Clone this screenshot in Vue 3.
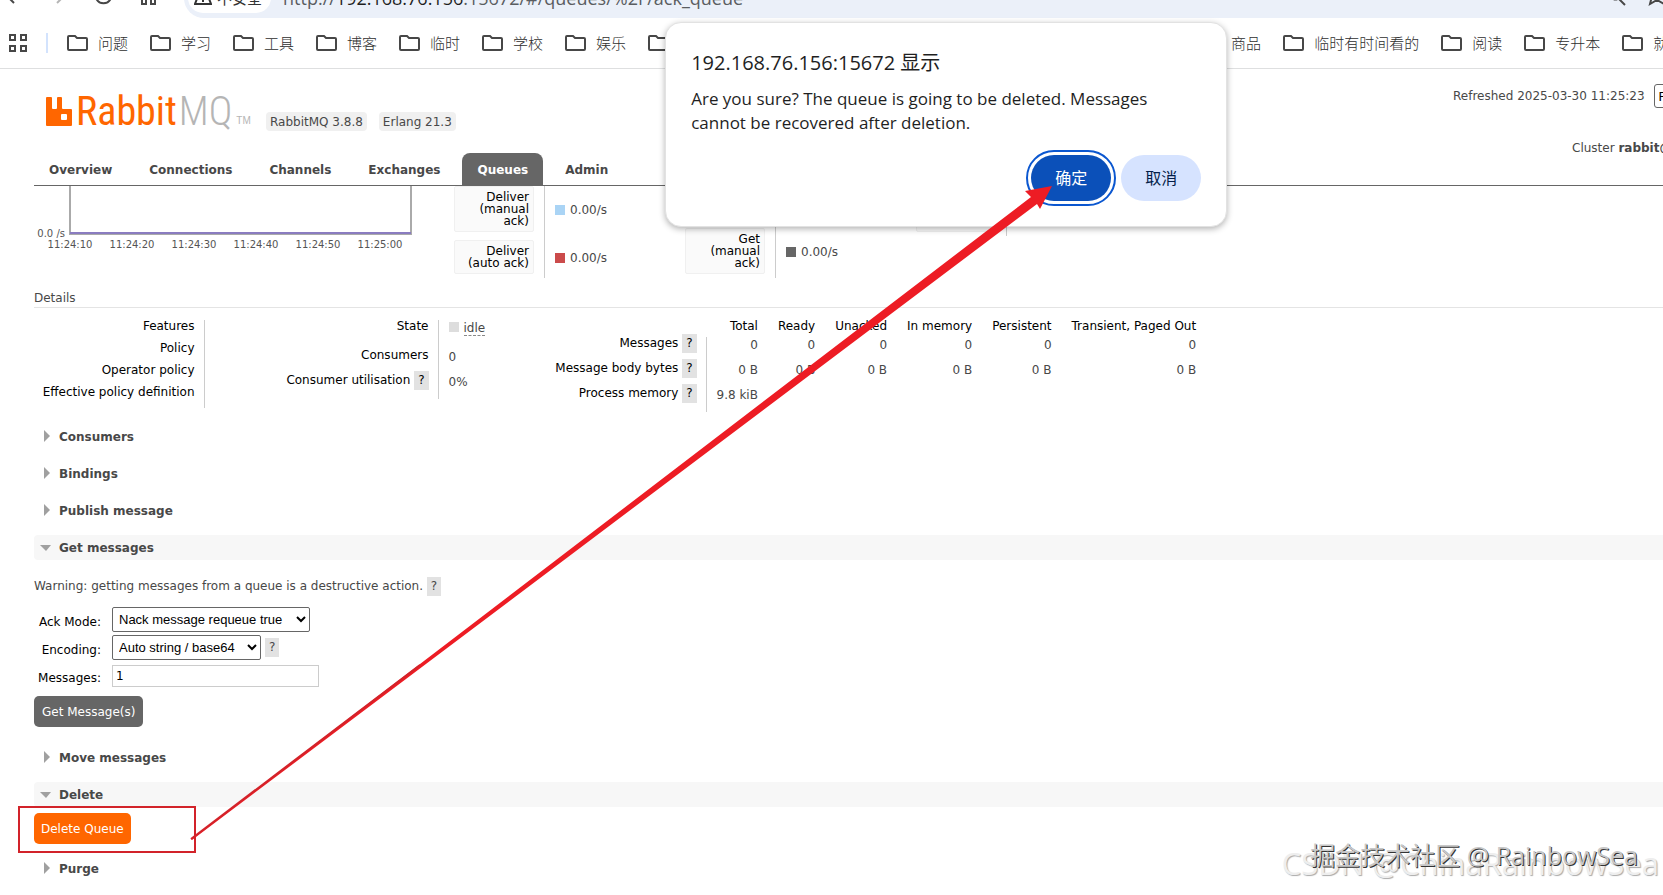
<script setup>
import { ref } from 'vue'

const bookmarks = ['问题', '学习', '工具', '博客', '临时', '学校', '娱乐', '']
const moreBookmarks = ['商品', '临时有时间看的', '阅读', '专升本', '就业']
const tabs = ['Overview', 'Connections', 'Channels', 'Exchanges', 'Queues', 'Admin']
const ticks = ['11:24:10', '11:24:20', '11:24:30', '11:24:40', '11:24:50', '11:25:00']
const columns = ['Total', 'Ready', 'Unacked', 'In memory', 'Persistent', 'Transient, Paged Out']
const usage = [
  { name: 'Messages', values: ['0', '0', '0', '0', '0', '0'] },
  { name: 'Message body bytes', values: ['0 B', '0 B', '0 B', '0 B', '0 B', '0 B'] },
  { name: 'Process memory', values: ['9.8 kiB', '', '', '', '', ''] },
]
const ackMode = ref('Nack message requeue true')
const encoding = ref('Auto string / base64')
const count = ref('1')
</script>

<template>
  <div class="window">
    <header class="toolbar">
      <svg class="nav-icons" width="184" height="19" viewBox="0 0 184 19" fill="none" stroke="#474747" stroke-width="2">
        <path d="M8 -3l6 6" />
        <path d="M63 -3l-6 6" stroke="#b5b5b5" />
        <path d="M96 -2a8 8 0 0 0 15 0" />
        <path d="M142 -4v8h4v-6h5v6h4v-8" />
      </svg>
      <div class="omnibox">
        <div class="chip">
          <svg width="18" height="10" viewBox="0 0 18 10" fill="none" stroke="#333" stroke-width="2"><path d="M4 -3L1 5h16L14 -3M9 -2v5" /></svg>
          <span>不安全</span>
        </div>
        <span class="url">http://<b>192.168.76.156</b>:15672/#/queues/%2F/ack_queue</span>
        <svg class="end-icons" width="56" height="12" viewBox="0 0 56 12" fill="none" stroke="#474747" stroke-width="2"><path d="M5 -1c2 2 5 2 7 0M11 -1l7 7M45 -3l-2 8l7-4l7 4" /></svg>
      </div>
    </header>

    <nav class="bookmarks">
      <svg class="apps" width="18" height="18" viewBox="0 0 18 18" fill="none" stroke="#474747" stroke-width="2"><path d="M1 1h5v5H1zM12 1h5v5h-5zM1 12h5v5H1zM12 12h5v5h-5z" /></svg>
      <span class="divider"></span>
      <a v-for="b in bookmarks" :key="b" href="#" class="bookmark">
        <svg width="21" height="16" viewBox="0 0 21 16"><path d="M1 14V2q0-1 1-1h6l2 2h9q1 0 1 1v10q0 1-1 1H2q-1 0-1-1z" fill="none" stroke="#474747" stroke-width="2" /></svg>
        <span>{{ b }}</span>
      </a>
      <div class="bookmarks-more">
        <a v-for="b in moreBookmarks" :key="b" href="#" class="bookmark">
          <svg width="21" height="16" viewBox="0 0 21 16"><path d="M1 14V2q0-1 1-1h6l2 2h9q1 0 1 1v10q0 1-1 1H2q-1 0-1-1z" fill="none" stroke="#474747" stroke-width="2" /></svg>
          <span>{{ b }}</span>
        </a>
      </div>
    </nav>

    <div class="masthead">
      <a class="logo" href="#">
        <svg width="26" height="29" viewBox="0 0 26 29"><path fill="#f60" fill-rule="evenodd" d="M1 0h4q1 0 1 1v10q0 1 1 1h3q1 0 1-1V1q0-1 1-1h3q1 0 1 1v10q0 1 1 1h8q1 0 1 1v15q0 1-1 1H1q-1 0-1-1V1q0-1 1-1zM16 17q-1 0-1 1v4q0 1 1 1h4q1 0 1-1v-4q0-1-1-1z" /></svg>
        <span class="brand">Rabbit<span class="mq">MQ</span></span><span class="tm">TM</span>
      </a>
      <span class="badge">RabbitMQ 3.8.8</span>
      <span class="badge">Erlang 21.3</span>
      <div class="status">
        <div class="refreshed">
          <label for="interval">Refreshed 2025-03-30 11:25:23</label>
          <select id="interval"><option>Refresh every 5 seconds</option></select>
        </div>
        <div class="cluster">Cluster <b>rabbit@</b></div>
      </div>
    </div>

    <nav class="tabs">
      <a v-for="t in tabs" :key="t" href="#" :class="{ active: t === 'Queues' }">{{ t }}</a>
    </nav>

    <main>
      <div class="rates">
        <svg class="chart" width="420" height="70" viewBox="0 0 420 70">
          <path d="M36 0V48H377V0" fill="none" stroke="#aaa" stroke-width="2" />
          <path d="M36 47H377" stroke="#8a7cc0" stroke-width="2" />
          <text x="31" y="51" text-anchor="end">0.0 /s</text>
          <text v-for="(t, i) in ticks" :key="t" :x="36 + i * 62" y="62" text-anchor="middle">{{ t }}</text>
        </svg>
        <div class="group">
          <div class="rate"><span class="card">Deliver<br>(manual<br>ack)</span><span class="value"><i class="blue"></i>0.00/s</span></div>
          <div class="rate"><span class="card">Deliver<br>(auto ack)</span><span class="value"><i class="red"></i>0.00/s</span></div>
        </div>
        <div class="group below">
          <div class="rate"><span class="card">Get<br>(manual<br>ack)</span><span class="value"><i class="grey"></i>0.00/s</span></div>
        </div>
        <div class="group">
          <div class="rate"><span class="card tall"></span><span class="value"></span></div>
        </div>
      </div>

      <h3>Details</h3>
      <div class="facts">
        <table class="policy">
          <tbody>
            <tr><th>Features</th><td></td></tr>
            <tr><th>Policy</th><td></td></tr>
            <tr><th>Operator policy</th><td></td></tr>
            <tr><th>Effective policy definition</th><td></td></tr>
          </tbody>
        </table>
        <table class="state">
          <tbody>
            <tr class="first"><th>State</th><td><i class="light"></i><abbr>idle</abbr></td></tr>
            <tr><th>Consumers</th><td>0</td></tr>
            <tr><th>Consumer utilisation <a class="help" href="#">?</a></th><td>0%</td></tr>
          </tbody>
        </table>
        <table class="usage">
          <thead>
            <tr><td></td><th v-for="c in columns" :key="c">{{ c }}</th></tr>
          </thead>
          <tbody>
            <tr v-for="u in usage" :key="u.name">
              <th>{{ u.name }} <a class="help" href="#">?</a></th>
              <td v-for="(v, i) in u.values" :key="i">{{ v }}</td>
            </tr>
          </tbody>
        </table>
      </div>

      <h2><button>Consumers</button></h2>
      <h2><button>Bindings</button></h2>
      <h2><button>Publish message</button></h2>
      <h2 class="open"><button>Get messages</button></h2>
      <p class="warning">Warning: getting messages from a queue is a destructive action. <a class="help" href="#">?</a></p>
      <form @submit.prevent>
        <div class="field">
          <label for="ack">Ack Mode:</label>
          <select id="ack" v-model="ackMode" class="wide"><option>Nack message requeue true</option></select>
        </div>
        <div class="field">
          <label for="enc">Encoding:</label>
          <select id="enc" v-model="encoding"><option>Auto string / base64</option></select>
          <a class="help" href="#">?</a>
        </div>
        <div class="field">
          <label for="count">Messages:</label>
          <input id="count" v-model="count" type="text">
        </div>
        <button class="action">Get Message(s)</button>
      </form>
      <h2><button>Move messages</button></h2>
      <h2 class="open"><button>Delete</button></h2>
      <div class="delete"><button class="action danger">Delete Queue</button></div>
      <h2><button>Purge</button></h2>
    </main>

    <div class="dialog" role="dialog" aria-labelledby="dialog-title">
      <h1 id="dialog-title">192.168.76.156:15672 显示</h1>
      <p>Are you sure? The queue is going to be deleted. Messages cannot be recovered after deletion.</p>
      <div class="buttons">
        <button class="ok">确定</button>
        <button class="cancel">取消</button>
      </div>
    </div>

    <svg class="annotation" width="1100" height="895" viewBox="0 0 1100 895">
      <rect x="19" y="807" width="176" height="45" fill="none" stroke="#d2232a" stroke-width="2" />
      <path d="M191 839L1031 197L1025 191L1052 186L1040 209L1037 204L192 840z" fill="#ed1c24" />
      <path d="M191 839L420 665" stroke="#d2232a" stroke-width="2" />
    </svg>
    <div class="mark back">CSDN @ChinaRainbowSea</div>
    <div class="mark front">掘金技术社区 @ RainbowSea</div>
  </div>
</template>

<style>
body { margin: 0; background: #fff; }
</style>

<style scoped>
* { box-sizing: border-box; }
.window {
  position: relative;
  min-height: 100vh;
  overflow: hidden;
  background: #fff;
  color: #484848;
  font: 12px/16px "DejaVu Sans", Verdana, sans-serif;
}
a { color: inherit; text-decoration: none; }
button { font: inherit; border: 0; cursor: pointer; }

.toolbar { display: flex; height: 18px; overflow: hidden; }
.nav-icons { flex: none; }
.omnibox {
  flex: 1;
  display: flex;
  align-items: center;
  height: 40px;
  margin-top: -22px;
  padding-left: 4px;
  border-radius: 20px 0 0 20px;
  background: #ebf0f9;
  font: 18px/24px "Open Sans", "Noto Sans CJK SC", sans-serif;
  white-space: nowrap;
}
.chip {
  display: flex;
  align-items: center;
  gap: 5px;
  height: 30px;
  padding: 0 9px 0 6px;
  border-radius: 15px;
  background: #fff;
  color: #333;
  font-size: 15px;
}
.chip svg { margin-top: 12px; }
.url { margin-left: 12px; color: #5a5d61; }
.url b { font-weight: 400; color: #1f1f1f; }
.end-icons { margin: 14px 0 0 auto; }

.bookmarks {
  display: flex;
  align-items: center;
  height: 51px;
  padding-left: 9px;
  border-bottom: 1px solid #dedfe0;
  color: #2e2e2e;
  font: 15px/20px "Noto Sans CJK SC", sans-serif;
  font-weight: 300;
  white-space: nowrap;
}
.apps { flex: none; }
.divider { flex: none; width: 2px; height: 20px; margin: 0 19px; background: #d3e3fd; }
.bookmark { flex: none; display: flex; align-items: center; gap: 10px; margin-right: 22px; }
.bookmarks-more { display: flex; margin-left: 499px; }

.masthead { display: flex; height: 84px; padding: 28px 0 0 46px; }
.logo { display: flex; width: 220px; height: 29px; color: #f60; }
.brand { margin-left: 4px; font: 40px/30px "Liberation Sans Narrow", "Roboto Condensed", "Open Sans Condensed", sans-serif; }
.mq { margin-left: 2px; color: #b5b5b5; font-weight: 300; }
.tm { align-self: flex-end; margin-left: 4px; color: #b5b5b5; font: 10px/10px "Liberation Sans", sans-serif; }
.badge { height: 19px; margin: 15px 12px 0 0; padding: 0 4px; border-radius: 4px; background: #f0f0f0; line-height: 20px; white-space: nowrap; }
.status { width: 210px; margin-left: auto; overflow: hidden; white-space: nowrap; margin-top: -14px; }
.refreshed { display: flex; align-items: center; gap: 9px; height: 26px; }
.refreshed select { height: 24px; border: 1px solid #666; border-radius: 3px; background: #fff; }
.cluster { margin: 31px 0 0 119px; }

.tabs { display: flex; gap: 7px; margin-left: 34px; border-bottom: 1px solid #666; font-weight: 700; }
.tabs a { height: 32px; padding: 0 15px; border-radius: 8px 8px 0 0; line-height: 34px; }
.tabs .active { background: #666; color: #fff; }

main { padding-left: 34px; }
.rates { display: flex; height: 92px; overflow: hidden; }
.chart { flex: none; font-size: 10px; fill: #545454; }
.group { flex: none; width: 231px; margin-top: -4px; }
.below { padding-top: 42px; }
.rate { display: flex; }
.card { width: 80px; margin: 4px 10px 4px 0; padding: 4px; border: 1px solid #f0f0f0; border-radius: 2px; background: #fafafa; color: #000; line-height: 12px; text-align: right; }
.tall { height: 46px; }
.value { display: flex; align-items: center; gap: 5px; padding: 2px 0 0 10px; border-left: 1px solid #ccc; }
i { display: inline-block; width: 10px; height: 10px; }
.blue { background: #aad4f5; }
.red { background: #cb4b4b; }
.grey { background: #666; }
.light { margin-right: 5px; background: #ddd; }

h3 { margin: 12px 0 0; padding-bottom: 1px; border-bottom: 1px solid #e4e4e4; font-size: 12px; font-weight: 400; }
.facts { display: flex; align-items: flex-start; padding-top: 12px; }
table { border-collapse: collapse; line-height: 12px; white-space: nowrap; }
th { padding: 0 9px 0 0; color: #000; font-weight: 400; text-align: right; vertical-align: top; }
td { padding: 2px 0 0 10px; vertical-align: top; }
tbody th { border-right: 1px solid #ccc; }
.policy { width: 235px; }
.policy th { width: 170px; }
.policy tr { height: 22px; }
.state { width: 269px; }
.state th { width: 169px; }
.state tr { height: 25px; }
.state .first { height: 29px; }
abbr { border-bottom: 1px dashed #888; }
.usage tbody th { width: 168px; }
.usage thead tr { height: 17px; }
.usage tbody tr { height: 25px; }
.usage thead th { padding: 0 10px; }
.usage td { padding: 2px 10px 0; text-align: right; }
.help { padding: 2px 4px 3px; background: #e2e2e2; }

h2 { margin: 12px 0 0; border-radius: 4px 0 0 4px; font-size: 12px; line-height: 25px; }
h2 button { display: flex; align-items: center; width: 100%; height: 25px; padding: 1px 0 0 10px; background: none; color: inherit; text-align: left; }
h2 button::before { content: ""; width: 15px; height: 14px; background: #a0a0a0; clip-path: polygon(0 0, 6px 6px, 0 12px); }
h2.open { background: #f7f7f7; }
h2.open button { padding-left: 6px; }
h2.open button::before { width: 19px; clip-path: polygon(0 4px, 11px 4px, 6px 10px); }
.warning { margin: 18px 0 13px; }
form { margin-bottom: 18px; }
.field { display: flex; align-items: center; height: 28px; padding-bottom: 3px; color: #000; }
.field label { width: 67px; margin-right: 11px; padding-top: 4px; text-align: right; }
.field select { width: 149px; height: 25px; padding: 0 2px; border: 1px solid #666; border-radius: 2px; background: #fff; font: 13px "Liberation Sans", Arial, sans-serif; color: #000; }
.field .wide { width: 198px; }
.field input { width: 207px; height: 22px; padding: 0 3px; border: 1px solid #ccc; font: inherit; }
.field .help { margin-left: 4px; padding: 1px 4px 2px; color: #484848; }
.action { display: block; height: 31px; padding: 0 7px; border-radius: 5px; background: #666; color: #fff; }
form .action { margin-top: 5px; padding: 0 8px; }
.delete { padding-top: 6px; }
.danger { background: #f60; }

.dialog {
  position: absolute;
  top: 22px;
  left: 40%;
  width: 562px;
  height: 205px;
  padding: 26px 25px 25px;
  border: 1px solid #e2e2e2;
  border-radius: 16px;
  background: #fff;
  box-shadow: 0 2px 6px rgba(0, 0, 0, .3);
  color: #1f1f1f;
  font: 16px/24px "Open Sans", "Noto Sans CJK SC", sans-serif;
}
.dialog h1 { margin: 0; font-size: 20px; font-weight: 400; line-height: 28px; }
.dialog p { width: 470px; margin: 10px 0 0; font-size: 17px; }
.buttons { display: flex; justify-content: flex-end; gap: 10px; margin-top: 20px; }
.buttons button { width: 80px; height: 46px; border-radius: 23px; }
.ok { background: #0b50b9; color: #fff; outline: 2px solid #0b57d0; outline-offset: 3px; }
.cancel { background: #d6e3ff; color: #041e49; }

.annotation { position: absolute; top: 0; left: 0; pointer-events: none; }
.mark { position: absolute; white-space: nowrap; font: 25px/32px "Open Sans", "Noto Sans CJK SC", sans-serif; }
.back { right: 4px; bottom: 16px; color: #eee; font-size: 31px; text-shadow: 1px 1px 1px #aaa; }
.front { right: 25px; bottom: 24px; color: #c8c8c8; text-shadow: 1px 1px 0 #333; }
</style>
